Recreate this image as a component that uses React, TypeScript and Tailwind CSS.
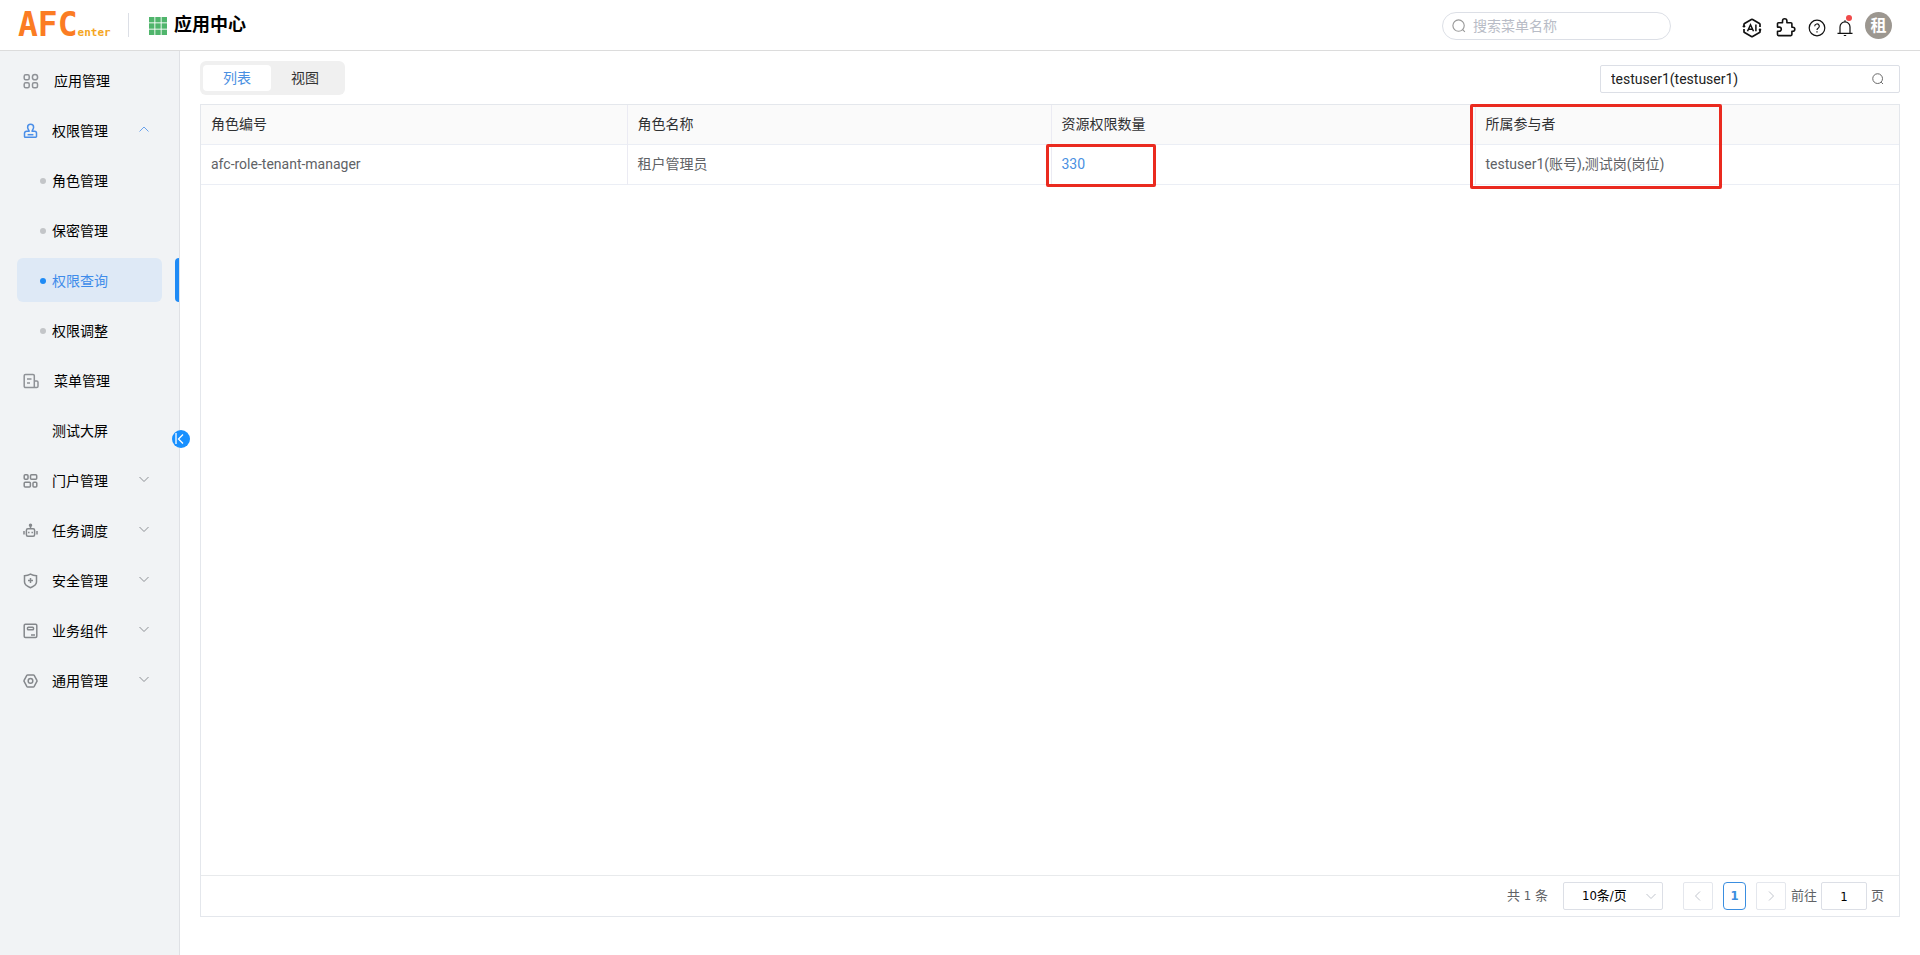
import { useState } from 'react';
import type { ReactNode } from 'react';
import clsx from 'clsx';

type MenuItem = {
    label: string;
    icon?: ReactNode;
    arrow?: 'up' | 'down';
    child?: boolean;
    tone?: string;
};

const Icon = ({ children, className = 'size-4' }: { children: ReactNode; className?: string }) => (
    <svg viewBox="0 0 16 16" fill="none" stroke="currentColor" strokeWidth="1.5" className={className} aria-hidden="true">
        {children}
    </svg>
);

const appsIcon = (
    <Icon>
        <rect x="1.2" y="1.7" width="5" height="5" rx="1.5" />
        <circle cx="12" cy="4.2" r="2.6" />
        <rect x="1.2" y="9.7" width="5" height="5" rx="1.5" />
        <rect x="9.5" y="9.7" width="5" height="5" rx="1.5" />
    </Icon>
);

const stampIcon = (
    <Icon>
        <path d="M6 8.3V7.6C5.2 6.5 4.6 5.4 4.6 4.3a3 3 0 0 1 6 0c0 1.1-.6 2.2-1.4 3.3v.7h2.3a2 2 0 0 1 2 2v3.2a.8.8 0 0 1-.8.8H2.3a.8.8 0 0 1-.8-.8v-3.2a2 2 0 0 1 2-2z" />
        <path d="M4.6 11.7h5.8" />
    </Icon>
);

const listIcon = (
    <Icon>
        <path d="M11.3 14.5H2.5a1.3 1.3 0 0 1-1.3-1.3V2.8a1.3 1.3 0 0 1 1.3-1.3h7.5a1.3 1.3 0 0 1 1.3 1.3zM11.3 8h2.4a1.3 1.3 0 0 1 1.3 1.3v3.9a1.3 1.3 0 0 1-1.3 1.3h-2.4" />
        <path d="M4 6h4.5M4 10h3" />
    </Icon>
);

const portalIcon = (
    <Icon>
        <rect x="1.2" y="1.7" width="3.8" height="4.5" rx="1" />
        <rect x="7.5" y="1.7" width="6.2" height="4.5" rx="1" />
        <rect x="1.2" y="9.2" width="6.2" height="4.8" rx="1" />
        <rect x="10" y="9.2" width="3.8" height="4.8" rx="1" />
    </Icon>
);

const robotIcon = (
    <Icon>
        <rect x="3.4" y="5.7" width="8.2" height="7.6" rx="1.5" />
        <path d="M7.5 5.5V3M1 8v3.5M14 8v3.5" />
        <circle cx="7.5" cy="2.2" r="1" fill="currentColor" />
        <path d="M5.8 8.8v1.4M9.2 8.8v1.4" />
    </Icon>
);

const shieldIcon = (
    <Icon>
        <path d="M7.5 1.2c1.7 1 3.7 1.5 6 1.5v6.3c0 2.8-2.7 4.4-6 5.7-3.3-1.3-6-2.9-6-5.7V2.7c2.3 0 4.3-.5 6-1.5z" />
        <path d="M7.5 5v5M5 7.5h5" />
    </Icon>
);

const moduleIcon = (
    <Icon>
        <rect x="1.2" y="1.2" width="12.6" height="13.2" rx="1.2" />
        <rect x="4.5" y="4.2" width="6" height="2.6" rx=".8" />
        <path d="M8 12h4" />
    </Icon>
);

const nutIcon = (
    <Icon>
        <path d="M4.7 1.9h5.6a1 1 0 0 1 .9.5l2.7 5a1 1 0 0 1 0 1l-2.7 5a1 1 0 0 1-.9.5H4.7a1 1 0 0 1-.9-.5l-2.7-5a1 1 0 0 1 0-1l2.7-5a1 1 0 0 1 .9-.5z" />
        <circle cx="7.5" cy="7.9" r="2.3" />
    </Icon>
);

const searchIcon = (
    <Icon className="size-full">
        <circle cx="7.5" cy="7.5" r="6.5" strokeWidth="1.3" />
        <path d="M12.2 12.2l2.5 2.5" strokeWidth="1.3" />
    </Icon>
);

const menu: MenuItem[] = [
    { label: '应用管理', icon: appsIcon, tone: 'text-[#8f9297]' },
    { label: '权限管理', icon: stampIcon, arrow: 'up', tone: 'text-[#4a8ee8]' },
    { label: '角色管理', child: true },
    { label: '保密管理', child: true },
    { label: '权限查询', child: true },
    { label: '权限调整', child: true },
    { label: '菜单管理', icon: listIcon, tone: 'text-[#8f9297]' },
    { label: '测试大屏' },
    { label: '门户管理', icon: portalIcon, arrow: 'down', tone: 'text-[#85888c]' },
    { label: '任务调度', icon: robotIcon, arrow: 'down', tone: 'text-[#85888c]' },
    { label: '安全管理', icon: shieldIcon, arrow: 'down', tone: 'text-[#85888c]' },
    { label: '业务组件', icon: moduleIcon, arrow: 'down', tone: 'text-[#85888c]' },
    { label: '通用管理', icon: nutIcon, arrow: 'down', tone: 'text-[#85888c]' },
];

const Chevron = ({ direction, className }: { direction: 'up' | 'down' | 'left' | 'right'; className: string }) => {
    const paths = {
        up: 'M.5 7.5L5 3l4.5 4.5',
        down: 'M.5 3L5 7.5 9.5 3',
        left: 'M7 .5L2.5 5 7 9.5',
        right: 'M3 .5L7.5 5 3 9.5',
    };
    return (
        <svg viewBox="0 0 10 10" fill="none" stroke="currentColor" className={className} aria-hidden="true">
            <path d={paths[direction]} />
        </svg>
    );
};

const Header = () => (
    <header className="flex h-[51px] shrink-0 items-center border-b border-[#dcdcdc] bg-white pl-[18px] pr-7">
        <a href="#" className="flex w-[93px] items-baseline font-['DejaVu_Sans_Mono',monospace] font-bold">
            <span className="text-[33px] leading-10 text-[#fb7c23]">AFC</span>
            <span className="text-[11px] text-[#f5a623]">enter</span>
        </a>
        <div className="ml-[17px] h-6 w-px bg-[#dcdfe6]" />
        <svg viewBox="0 0 18 18" className="ml-5 mt-0.5 size-[18px]" fill="#50b56c" aria-hidden="true">
            {[0, 6.3, 12.6].map((y) => [0, 6.3, 12.6].map((x) => <rect key={`${x}-${y}`} x={x} y={y} width="5.4" height="5.4" />))}
        </svg>
        <h1 className="ml-[7px] text-lg font-bold text-black">应用中心</h1>
        <label className="ml-auto mt-px flex h-7 w-[229px] items-center gap-[7px] rounded-full border border-[#dcdfe6] pl-[9px]">
            <span className="size-[14px] text-[#999]">{searchIcon}</span>
            <input aria-label="搜索菜单名称" placeholder="搜索菜单名称" className="w-44 bg-transparent text-sm outline-none placeholder:text-[#b8bcc6]" />
        </label>
        <div className="ml-[71px] flex items-center text-[#111]">
            <button aria-label="AI" className="mt-1.5">
                <svg viewBox="0 0 20 20" fill="none" stroke="currentColor" strokeWidth="1.7" className="size-5">
                    <path d="M2 7.5V6.3a1 1 0 0 1 .5-.9L9.4 1.6a1.2 1.2 0 0 1 1.2 0l6.9 3.8a1 1 0 0 1 .5.9V9M18 12v1.7a1 1 0 0 1-.5.9l-6.9 3.8a1.2 1.2 0 0 1-1.2 0l-6.9-3.8a1 1 0 0 1-.5-.9V11" />
                    <circle cx="2" cy="8.3" r="1.3" fill="currentColor" stroke="none" />
                    <circle cx="18" cy="11.7" r="1.3" fill="currentColor" stroke="none" />
                    <path d="M5.5 13.3L8.5 6.700l3 6.600M6.500 11.300h4M13.900 6.400v6.900" strokeWidth="1.5" />
                </svg>
            </button>
            <button aria-label="插件" className="ml-[14px] mt-1">
                <svg viewBox="0 0 20 20" fill="none" stroke="currentColor" strokeWidth="1.6" strokeLinejoin="round" className="size-5">
                    <path d="M2.5 5.7h4V4a2.2 2.2 0 0 1 4.4 0v1.7h4a1 1 0 0 1 1 1v3.5h.9a2 2 0 0 1 0 4h-.9v3.4a1 1 0 0 1-1 1H2.5a1 1 0 0 1-1-1v-3.3h1.7a2 2 0 0 0 0-4.2H1.5V6.700a1 1 0 0 1 1-1z" />
                </svg>
            </button>
            <button aria-label="帮助" className="ml-3 mt-1.5">
                <svg viewBox="0 0 18 18" fill="none" stroke="currentColor" strokeWidth="1.2" className="size-[18px]">
                    <circle cx="9" cy="9" r="7.8" />
                    <path d="M6.7 7.3a2.3 2.3 0 1 1 3.4 2c-.8.5-1.1.8-1.1 1.7M9 12.2v1.4" />
                </svg>
            </button>
            <button aria-label="通知" className="relative ml-2.5 mt-1.5">
                <svg viewBox="0 0 18 18" fill="none" stroke="currentColor" strokeWidth="1.2" className="size-[18px]">
                    <path d="M1.5 14.4h15M4 14.4V7.9a5 5 0 0 1 10 0v6.5M9 1.3V3M7.8 16.5h2.4" />
                </svg>
                <span className="absolute -top-1 right-0.5 size-1.5 rounded-full bg-[#f04a4a]" />
            </button>
            <button className="ml-[11px] size-[27px] rounded-full bg-[#9c9790] text-base font-bold leading-[27px] text-white">租</button>
        </div>
    </header>
);

const Sidebar = () => {
    const [active, setActive] = useState('权限查询');

    return (
        <aside className="relative w-[180px] shrink-0 border-r border-[#dfe1e5] bg-[#f1f3f5] pt-[7px]">
            <nav>
                <ul className="flex flex-col gap-1.5">
                    {menu.map((item) => {
                        const isActive = active === item.label;
                        const isLeaf = item.icon && !item.arrow;
                        return (
                            <li key={item.label} className="relative px-[17px]">
                                <button
                                    onClick={() => setActive(item.label)}
                                    className={clsx(
                                        'flex h-11 w-full items-center rounded-md pt-px text-sm',
                                        isActive ? 'bg-[#dee9f6] text-[#3f8cea]' : 'text-black'
                                    )}
                                >
                                    <span className={clsx('flex items-center', isLeaf ? 'w-[37px]' : 'w-[35px]', item.child ? 'pl-[23px]' : 'pl-1.5', item.tone)}>
                                        {item.child && <i className={clsx('size-1.5 rounded-full', isActive ? 'bg-[#1f8bf5]' : 'bg-[#c3c5c8]')} />}
                                        {item.icon}
                                    </span>
                                    {item.label}
                                    {item.arrow && (
                                        <Chevron
                                            direction={item.arrow}
                                            className={clsx('mb-1 ml-auto mr-[13px] size-2.5', item.arrow === 'up' ? 'text-[#6aa2ec]' : 'text-[#8c8f94]')}
                                        />
                                    )}
                                </button>
                                {isActive && <span className="absolute inset-y-0 right-0 w-1 rounded-l bg-[#1f8bf5]" />}
                            </li>
                        );
                    })}
                </ul>
            </nav>
            <button aria-label="收起菜单" className="absolute -right-[11px] top-[379px] size-[18px] rounded-full bg-[#1890ff] text-white">
                <svg viewBox="0 0 18 18" fill="none" stroke="currentColor" strokeWidth="1.3" className="size-[18px]">
                    <path d="M4 3v11M11 4.5L6.5 9l4.5 4.5" />
                </svg>
            </button>
        </aside>
    );
};

const Toolbar = () => {
    const [tab, setTab] = useState('列表');

    return (
        <div className="flex items-center justify-between">
            <div className="flex h-[34px] rounded-md bg-[#f0f0f0] py-1 pl-[3px] pr-1.5">
                {['列表', '视图'].map((name) => (
                    <button
                        key={name}
                        onClick={() => setTab(name)}
                        className={clsx('w-[68px] rounded text-sm', tab === name ? 'bg-white text-[#4a90e2]' : 'text-[#333]')}
                    >
                        {name}
                    </button>
                ))}
            </div>
            <label className="mt-0.5 flex h-7 w-[300px] items-center rounded-xs border border-[#dcdfe6] pl-2.5 pr-[15px]">
                <input aria-label="用户" defaultValue="testuser1(testuser1)" className="min-w-0 flex-1 bg-transparent text-sm text-[#222] outline-none" />
                <span className="size-3 text-[#666]">{searchIcon}</span>
            </label>
        </div>
    );
};

const RoleTable = () => (
    <table className="w-full table-fixed border-collapse text-left text-sm">
        <thead className="bg-[#fafafa] text-[#303133]">
            <tr className="h-[39px] border-b border-[#ebeef5]">
                <th className="w-[426px] border-r border-[#ebebf3] px-2.5 font-normal">角色编号</th>
                <th className="border-r border-[#ebebf3] px-2.5 font-normal">角色名称</th>
                <th className="border-r border-[#ebebf3] px-2.5 font-normal">资源权限数量</th>
                <th className="relative px-2.5 font-normal">
                    所属参与者
                    <span className="pointer-events-none absolute -left-1.5 -top-px h-[85px] w-[252px] rounded-xs border-3 border-[#ea2a1f]" />
                </th>
            </tr>
        </thead>
        <tbody className="text-[#606266]">
            <tr className="h-10 border-b border-[#ebeef5]">
                <td className="border-r border-[#ebebf3] px-2.5">afc-role-tenant-manager</td>
                <td className="border-r border-[#ebebf3] px-2.5">租户管理员</td>
                <td className="relative px-2.5">
                    <a href="#" className="text-[#4a90e2]">330</a>
                    <span className="pointer-events-none absolute -left-1.5 -top-px h-[43px] w-[110px] rounded-xs border-3 border-[#ea2a1f]" />
                </td>
                <td className="border-l border-[#ebebf3] px-2.5">testuser1(账号),测试岗(岗位)</td>
            </tr>
        </tbody>
    </table>
);

const Pagination = () => (
    <div className="flex h-[41px] items-center justify-end border-t border-[#e8eaec] pr-[15px] font-['DejaVu_Sans_Condensed','Noto_Sans_CJK_SC',sans-serif] text-[13px] text-[#606266]">
        <span>共 1 条</span>
        <div className="relative ml-[15px]">
            <select aria-label="每页条数" className="h-7 w-[100px] appearance-none rounded-xs border border-[#dcdfe6] bg-white pl-[18px] text-black outline-none">
                <option>10条/页</option>
                <option>20条/页</option>
                <option>50条/页</option>
            </select>
            <Chevron direction="down" className="pointer-events-none absolute right-[7px] top-[9px] size-2.5 text-[#c0c4cc]" />
        </div>
        <button disabled aria-label="上一页" className="ml-5 flex h-7 w-[30px] items-center justify-center rounded-xs border border-[#e4e7ed] text-[#c0c4cc]">
            <Chevron direction="left" className="size-2.5" />
        </button>
        <button className="ml-2.5 h-7 w-[23px] rounded border border-[#3a8ee0] font-bold text-[#3a8ee0]">1</button>
        <button disabled aria-label="下一页" className="ml-2.5 flex h-7 w-[30px] items-center justify-center rounded-xs border border-[#e4e7ed] text-[#c0c4cc]">
            <Chevron direction="right" className="size-2.5" />
        </button>
        <label className="ml-[5px] flex items-center gap-1">
            前往
            <input defaultValue="1" className="h-7 w-[46px] rounded-xs border border-[#dcdfe6] text-center text-black outline-none" />
            页
        </label>
    </div>
);

export default function App() {
    return (
        <div className="flex min-h-screen flex-col bg-white font-[Roboto,'Noto_Sans_CJK_SC',sans-serif]">
            <Header />
            <div className="flex flex-1">
                <Sidebar />
                <main className="flex min-w-0 flex-1 flex-col px-5 pb-[38px] pt-2.5">
                    <Toolbar />
                    <section className="mt-[9px] flex flex-1 flex-col border border-[#e4e7ec]">
                        <div className="flex-1">
                            <RoleTable />
                        </div>
                        <Pagination />
                    </section>
                </main>
            </div>
        </div>
    );
}
